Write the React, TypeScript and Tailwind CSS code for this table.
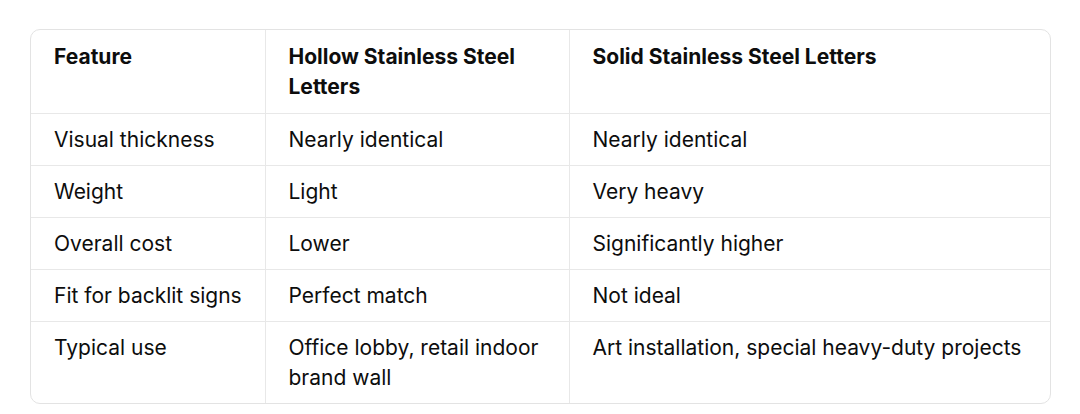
import React from 'react'

const rows = [
  ['Visual thickness', 'Nearly identical', 'Nearly identical'],
  ['Weight', 'Light', 'Very heavy'],
  ['Overall cost', 'Lower', 'Significantly higher'],
  ['Fit for backlit signs', 'Perfect match', 'Not ideal'],
  ['Typical use', 'Office lobby, retail indoor brand wall', 'Art installation, special heavy-duty projects'],
]

const App = () => {
  return (
    <div className="w-[1080px] h-[414px] bg-white pt-[29px] pl-[30px] font-['Inter',sans-serif] text-[21px] leading-[30px] text-[#0d0d0d]">
      <div className="w-[1021px] rounded-[10px] border border-[#e3e3e3] overflow-hidden">
        <table className="w-full table-fixed border-collapse">
          <colgroup>
            <col className="w-[234px]" />
            <col className="w-[304px]" />
            <col />
          </colgroup>
          <thead>
            <tr className="border-b border-[#e8e8e8]">
              <th className="pl-[23px] pr-5 py-[11.5px] text-left align-top font-bold">Feature</th>
              <th className="pl-[23px] pr-5 py-[11.5px] text-left align-top font-bold border-l border-[#e8e8e8]">
                Hollow Stainless Steel Letters
              </th>
              <th className="pl-[23px] pr-5 py-[11.5px] text-left align-top font-bold border-l border-[#e8e8e8]">
                Solid Stainless Steel Letters
              </th>
            </tr>
          </thead>
          <tbody>
            {rows.map((r, i) => (
              <tr key={i} className={i < rows.length - 1 ? 'border-b border-[#e8e8e8]' : ''}>
                <td className="pl-[23px] pr-5 py-[10.5px] align-top">{r[0]}</td>
                <td className="pl-[23px] pr-5 py-[10.5px] align-top border-l border-[#e8e8e8]">{r[1]}</td>
                <td className="pl-[23px] pr-5 py-[10.5px] align-top border-l border-[#e8e8e8]">{r[2]}</td>
              </tr>
            ))}
          </tbody>
        </table>
      </div>
    </div>
  )
}

export default App
